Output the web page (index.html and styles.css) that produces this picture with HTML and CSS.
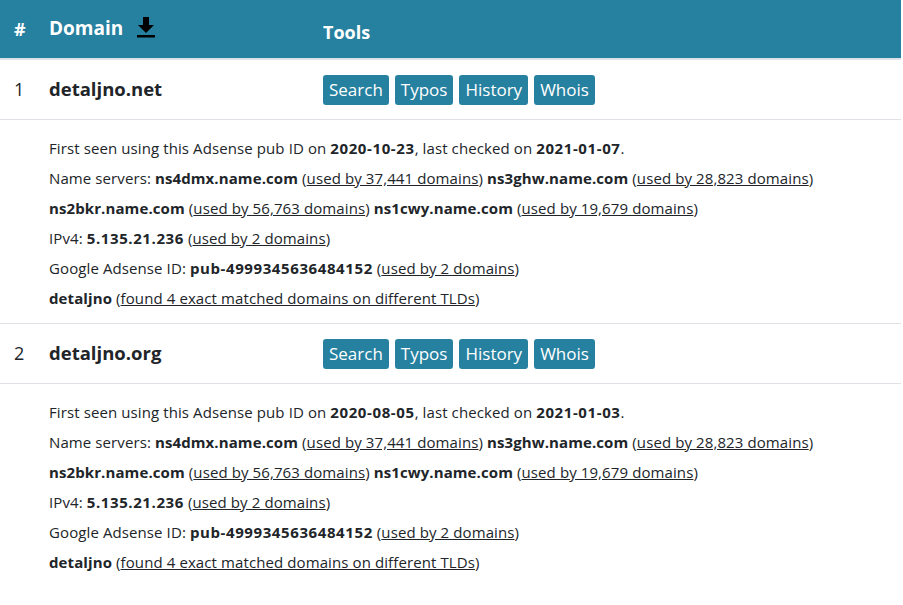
FILE: index.html
```html
<!DOCTYPE html>
<html lang="en">
<head>
    <meta charset="UTF-8">
    <meta name="viewport" content="width=device-width, initial-scale=1.0">
    <title>Domains</title>
    <link rel="stylesheet" href="styles.css">
</head>
<body>

    <table class="domains">
        <thead>
            <tr>
                <th class="col-num">#</th>
                <th class="col-domain">Domain <svg class="dl-icon" width="20" height="22" viewBox="0 0 20 22"><path d="M7 1h6v8h5l-8 8-8-8h5z" fill="#000"/><rect x="1" y="19" width="18" height="2.5" fill="#000"/></svg></th>
                <th class="col-tools">Tools</th>
            </tr>
        </thead>
        <tbody>
            <tr class="main-row">
                <td class="num">1</td>
                <td class="name">detaljno.net</td>
                <td class="tools">
                    <div class="btn-group">
                        <a class="btn" href="#">Search</a>
                        <a class="btn" href="#">Typos</a>
                        <a class="btn" href="#">History</a>
                        <a class="btn" href="#">Whois</a>
                    </div>
                </td>
            </tr>
            <tr class="detail-row">
                <td colspan="3">
                    <div>First seen using this Adsense pub ID on <b class="val">2020-10-23</b>, last checked on <b class="val">2021-01-07</b>.</div>
                    <div>Name servers: <b>ns4dmx.name.com</b> (<a href="#">used by 37,441 domains</a>) <b>ns3ghw.name.com</b> (<a href="#">used by 28,823 domains</a>)</div>
                    <div><b>ns2bkr.name.com</b> (<a href="#">used by 56,763 domains</a>) <b>ns1cwy.name.com</b> (<a href="#">used by 19,679 domains</a>)</div>
                    <div>IPv4: <b class="val">5.135.21.236</b> (<a href="#">used by 2 domains</a>)</div>
                    <div>Google Adsense ID: <b class="val">pub-4999345636484152</b> (<a href="#">used by 2 domains</a>)</div>
                    <div><b>detaljno</b> (<a href="#">found 4 exact matched domains on different TLDs</a>)</div>
                </td>
            </tr>
            <tr class="main-row">
                <td class="num">2</td>
                <td class="name">detaljno.org</td>
                <td class="tools">
                    <div class="btn-group">
                        <a class="btn" href="#">Search</a>
                        <a class="btn" href="#">Typos</a>
                        <a class="btn" href="#">History</a>
                        <a class="btn" href="#">Whois</a>
                    </div>
                </td>
            </tr>
            <tr class="detail-row">
                <td colspan="3">
                    <div>First seen using this Adsense pub ID on <b class="val">2020-08-05</b>, last checked on <b class="val">2021-01-03</b>.</div>
                    <div>Name servers: <b>ns4dmx.name.com</b> (<a href="#">used by 37,441 domains</a>) <b>ns3ghw.name.com</b> (<a href="#">used by 28,823 domains</a>)</div>
                    <div><b>ns2bkr.name.com</b> (<a href="#">used by 56,763 domains</a>) <b>ns1cwy.name.com</b> (<a href="#">used by 19,679 domains</a>)</div>
                    <div>IPv4: <b class="val">5.135.21.236</b> (<a href="#">used by 2 domains</a>)</div>
                    <div>Google Adsense ID: <b class="val">pub-4999345636484152</b> (<a href="#">used by 2 domains</a>)</div>
                    <div><b>detaljno</b> (<a href="#">found 4 exact matched domains on different TLDs</a>)</div>
                </td>
            </tr>
        </tbody>
    </table>

</body>
</html>
```

FILE: styles.css
```css
body {
    font-family: "Open Sans", "Noto Sans", sans-serif;
    margin: 0;
    padding: 0;
    background-color: #fff;
    color: #212529;
}

.domains {
    width: 901px;
    border-collapse: collapse;
    table-layout: fixed;
}

.domains th {
    background-color: #26809f;
    color: #fff;
    text-align: left;
    font-size: 18px;
    font-weight: bold;
    height: 59px;
    padding: 0 12px;
    border-bottom: 2px solid #dee2e6;
    box-sizing: border-box;
}

.domains .col-num {
    width: 37px;
    padding-left: 14px;
}

.domains .col-domain {
    width: 274px;
    font-size: 19px;
    padding-bottom: 3px;
}

.domains .col-tools {
    padding-top: 6px;
}

.dl-icon {
    vertical-align: -3px;
    margin-left: 8px;
}

.main-row td {
    height: 60px;
    padding: 0 12px;
    border-bottom: 1px solid #dee2e6;
    box-sizing: border-box;
}

.main-row .num {
    font-size: 18px;
    padding-left: 14px;
}

.main-row .name {
    font-size: 18.5px;
    font-weight: bold;
    padding-bottom: 1px;
}

.btn-group {
    display: flex;
    gap: 6px;
    padding-top: 2px;
}

.btn {
    display: block;
    background-color: #26809f;
    color: #fff;
    text-decoration: none;
    font-size: 17px;
    height: 30px;
    line-height: 30px;
    padding: 0 6px;
    border-radius: 3px;
}

.detail-row td {
    padding: 13px 12px 10px 49px;
    font-size: 15px;
    line-height: 30px;
    letter-spacing: 0.1px;
    border-bottom: 1px solid #dee2e6;
}

/* bold numbers run wider in the original font */
.detail-row .val {
    letter-spacing: 0.6px;
}

.detail-row:last-child td {
    border-bottom: none;
}

.detail-row a {
    color: #212529;
}
```
